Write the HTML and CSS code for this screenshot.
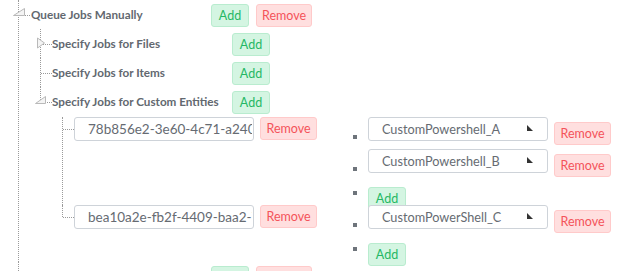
FILE: index.html
```html
<!DOCTYPE html>
<html>
<head>
<meta charset="utf-8">
<link rel="stylesheet" href="styles.css">
</head>
<body>
<div class="tree">
  <div class="branch root-branch">
    <div class="node">
      <div class="row">
        <svg class="toggle open" width="14" height="10" viewBox="0 0 14 10"><polygon points="1.5,8.5 12.5,8.5 12.5,1.5" fill="#f4f4f4" stroke="#b9b9b9" stroke-width="1"/></svg>
        <span class="label">Queue Jobs Manually</span>
        <button class="btn add">Add</button>
        <button class="btn remove">Remove</button>
      </div>
      <div class="branch child-branch">
        <div class="node">
          <div class="row">
            <svg class="toggle closed" width="10" height="12" viewBox="0 0 10 12"><polygon points="1.5,1 8.5,6 1.5,11" fill="#f4f4f4" stroke="#b9b9b9" stroke-width="1"/></svg>
            <span class="label">Specify Jobs for Files</span>
            <button class="btn add">Add</button>
          </div>
        </div>
        <div class="node">
          <div class="row">
            <span class="label">Specify Jobs for Items</span>
            <button class="btn add">Add</button>
          </div>
        </div>
        <div class="node last">
          <div class="row">
            <svg class="toggle open" width="14" height="10" viewBox="0 0 14 10"><polygon points="1.5,8.5 11.5,8.5 11.5,1.5" fill="#f4f4f4" stroke="#b9b9b9" stroke-width="1"/></svg>
            <span class="label">Specify Jobs for Custom Entities</span>
            <button class="btn add">Add</button>
          </div>
          <div class="branch entity-branch">
            <div class="node entity">
              <input class="field" type="text" value="78b856e2-3e60-4c71-a240-5f3d1c9e8b27" readonly>
              <button class="btn remove">Remove</button>
              <ul class="picks">
                <li class="pick first">
                  <span class="bullet"></span>
                  <div class="select"><span>CustomPowershell_A</span><svg class="caret" width="6" height="6" viewBox="0 0 6 6"><polygon points="0,0 0,6 6,6" fill="#333"/></svg></div>
                  <button class="btn remove">Remove</button>
                </li>
                <li class="pick">
                  <span class="bullet"></span>
                  <div class="select"><span>CustomPowershell_B</span><svg class="caret" width="6" height="6" viewBox="0 0 6 6"><polygon points="0,0 0,6 6,6" fill="#333"/></svg></div>
                  <button class="btn remove">Remove</button>
                </li>
                <li class="adder">
                  <span class="bullet"></span>
                  <button class="btn add">Add</button>
                </li>
              </ul>
            </div>
            <div class="node entity last">
              <input class="field" type="text" value="bea10a2e-fb2f-4409-baa2-7c41e09d3a65" readonly>
              <button class="btn remove">Remove</button>
              <ul class="picks">
                <li class="pick">
                  <span class="bullet"></span>
                  <div class="select"><span>CustomPowerShell_C</span><svg class="caret" width="6" height="6" viewBox="0 0 6 6"><polygon points="0,0 0,6 6,6" fill="#333"/></svg></div>
                  <button class="btn remove">Remove</button>
                </li>
                <li class="adder">
                  <span class="bullet"></span>
                  <button class="btn add">Add</button>
                </li>
              </ul>
            </div>
          </div>
        </div>
      </div>
    </div>
    <div class="node">
      <div class="row">
        <span class="label"></span>
        <button class="btn add">Add</button>
        <button class="btn remove">Remove</button>
      </div>
    </div>
  </div>
</div>
</body>
</html>
```

FILE: styles.css
```css
html, body {
  margin: 0;
  padding: 0;
  background: #fff;
  overflow: hidden;
}
body {
  font-family: "Lato", "Open Sans", sans-serif;
  color: #5f656d;
}
.branch {
  display: flex;
  flex-direction: column;
}
.root-branch {
  margin-left: 18px;
}
.child-branch {
  margin-left: 9px;
}
.entity-branch {
  margin-left: 10px;
  padding: 1px 0;
}
.node {
  position: relative;
  padding-left: 13px;
}
.child-branch > .node,
.entity-branch > .node {
  padding-left: 12px;
}
.node::before {
  content: "";
  position: absolute;
  left: 0;
  top: 0;
  bottom: 0;
  border-left: 1px dotted #9a9a9a;
}
.node.last::before {
  bottom: auto;
  height: 15px;
}
.node::after {
  content: "";
  position: absolute;
  left: 1px;
  top: 15px;
  width: 11px;
  border-top: 1px dotted #9a9a9a;
}
.entity::after {
  top: 12px;
}
.entity.last::before {
  height: 12px;
}
.toggle {
  position: absolute;
  z-index: 1;
}
.root-branch > .node > .row > .toggle.open {
  left: -6px;
  top: 7px;
}
.child-branch .toggle.closed {
  left: -4px;
  top: 8px;
}
.child-branch .toggle.open {
  left: -6px;
  top: 8px;
}
.row {
  display: flex;
  align-items: flex-start;
  height: 29px;
}
.label {
  width: 180px;
  flex: none;
  line-height: 29px;
  font-size: 11.7px;
  font-weight: 700;
  white-space: nowrap;
  color: #62686f;
}
.btn {
  font-family: inherit;
  font-size: 12.5px;
  height: 23px;
  margin: 4px 0 0 0;
  padding: 0;
  border-radius: 3px;
  border: 1px solid;
  box-sizing: border-box;
  line-height: 21px;
  flex: none;
}
.btn.add {
  width: 38px;
  background: #d4f5e2;
  border-color: #b9eccf;
  color: #24b864;
}
.btn.remove {
  width: 56px;
  background: #ffdfdf;
  border-color: #ffcaca;
  color: #f4535a;
  margin-left: 7px;
}
.entity {
  display: flex;
  align-items: flex-start;
}
.field {
  width: 180px;
  height: 24px;
  box-sizing: border-box;
  border: 1px solid #ced3d9;
  border-radius: 3px;
  padding: 0 1px 0 13px;
  margin: 0;
  font-family: inherit;
  font-size: 13.5px;
  color: #666b72;
  flex: none;
  outline: none;
}
.entity > .btn.remove {
  margin: 0 0 0 6px;
  width: 57px;
}
.picks {
  list-style: none;
  margin: 0 0 0 36px;
  padding: 0;
}
.picks li {
  display: flex;
  align-items: flex-start;
}
.pick {
  height: 38px;
}
.pick.first {
  height: 32px;
}
.adder {
  height: 18px;
}
.bullet {
  width: 4px;
  height: 4px;
  background: #6e747b;
  margin: 18px 11px 0 0;
  flex: none;
}
.adder .bullet {
  margin-top: 4px;
}
.adder .btn.add {
  margin: 0;
}
.select {
  width: 180px;
  height: 24px;
  box-sizing: border-box;
  border: 1px solid #ced3d9;
  border-radius: 3px;
  padding: 0 14px 0 13px;
  font-size: 12.7px;
  line-height: 22px;
  color: #666b72;
  display: flex;
  justify-content: space-between;
  align-items: flex-start;
  background: #fff;
  flex: none;
}
.caret {
  margin-top: 7px;
  flex: none;
}
.pick .btn.remove {
  margin: 5px 0 0 6px;
  width: 57px;
}
```
